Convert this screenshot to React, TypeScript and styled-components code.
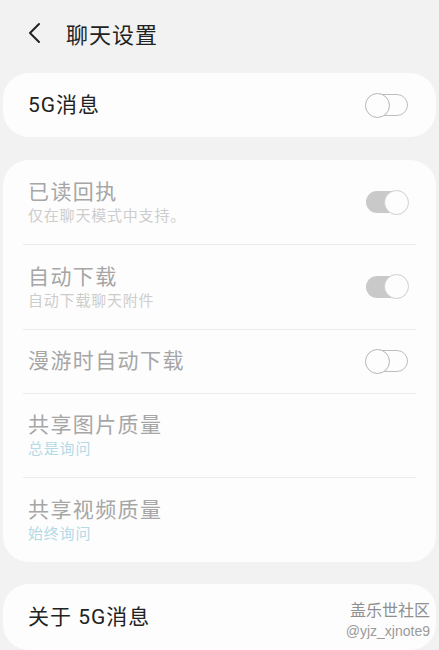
import React from "react";
import styled, { createGlobalStyle } from "styled-components";

const Global = createGlobalStyle`
  html, body { margin: 0; padding: 0; background: #f2f2f2; }
  body { font-family: "Roboto", "Noto Sans CJK SC", "Noto Sans", sans-serif; }
`;

const Page = styled.div`
  position: relative;
  width: 439px;
  height: 650px;
  overflow: hidden;
  background: #f2f2f2;
`;

const Header = styled.div`
  height: 66px;
  display: flex;
  align-items: center;
  padding-left: 26px;
  gap: 22px;
`;

const Title = styled.div`
  font-size: 22px;
  color: #222;
  letter-spacing: 1px;
`;

const Card = styled.div<{ $mt: number }>`
  margin: ${(p) => p.$mt}px 3px 0;
  background: #fdfdfd;
  border-radius: 26px;
  overflow: hidden;
`;

const Row = styled.div<{ $h: number; $divider?: boolean }>`
  position: relative;
  height: ${(p) => p.$h}px;
  display: flex;
  align-items: center;
  justify-content: space-between;
  padding: 0 28px 0 25px;
  ${(p) =>
    p.$divider
      ? `&::before { content: ""; position: absolute; top: 0; left: 20px; right: 20px; height: 1px; background: #ececec; }`
      : ""}
`;

const TextCol = styled.div`
  display: flex;
  flex-direction: column;
`;

const Label = styled.div<{ $dim?: boolean }>`
  font-size: 21px;
  line-height: 28px;
  color: ${(p) => (p.$dim ? "#a6a6a6" : "#222")};
  letter-spacing: ${(p) => (p.$dim ? "1.4px" : "1px")};
`;

const Sub = styled.div<{ $blue?: boolean }>`
  font-size: 15px;
  line-height: 20px;
  color: ${(p) => (p.$blue ? "#b3dae6" : "#cdcdcd")};
  letter-spacing: 0.8px;
`;

const Track = styled.div<{ $on: boolean }>`
  position: relative;
  width: 42px;
  height: 22px;
  box-sizing: border-box;
  border-radius: 11px;
  background: ${(p) => (p.$on ? "#c9c9c9" : "transparent")};
  border: ${(p) => (p.$on ? "none" : "1.5px solid #bdbdbd")};
`;

const Thumb = styled.div<{ $on: boolean }>`
  position: absolute;
  top: 50%;
  ${(p) => (p.$on ? "right: -1px;" : "left: -2px;")}
  width: 25px;
  height: 25px;
  margin-top: -12.5px;
  box-sizing: border-box;
  border-radius: 50%;
  background: #fdfdfd;
  border: 1.5px solid ${(p) => (p.$on ? "#cfcfcf" : "#b5b5b5")};
`;

const Watermark = styled.div`
  position: absolute;
  right: 9px;
  bottom: 10px;
  display: flex;
  flex-direction: column;
  align-items: flex-end;
  gap: 2px;
`;

const WmTop = styled.div`
  font-family: "Noto Sans CJK SC", sans-serif;
  font-size: 16px;
  line-height: 22px;
  color: #8f8f8f;
`;

const WmBottom = styled.div`
  font-family: "Liberation Sans", "Noto Sans", sans-serif;
  font-size: 14px;
  line-height: 18px;
  color: #9a9a9a;
`;

const Toggle = ({ on }: { on: boolean }) => (
  <Track $on={on}>
    <Thumb $on={on} />
  </Track>
);

const Back = () => (
  <svg width="18" height="22" viewBox="0 0 18 22">
    <path d="M13 2 L4 11 L13 20" fill="none" stroke="#222" strokeWidth="2" strokeLinecap="round" strokeLinejoin="round" />
  </svg>
);

export default function App() {
  return (
    <Page>
      <Global />
      <Header>
        <Back />
        <Title>聊天设置</Title>
      </Header>

      <Card $mt={7}>
        <Row $h={64}>
          <Label>5G消息</Label>
          <Toggle on={false} />
        </Row>
      </Card>

      <Card $mt={23}>
        <Row $h={84}>
          <TextCol>
            <Label $dim>已读回执</Label>
            <Sub>仅在聊天模式中支持。</Sub>
          </TextCol>
          <Toggle on />
        </Row>
        <Row $h={85} $divider>
          <TextCol>
            <Label $dim>自动下载</Label>
            <Sub>自动下载聊天附件</Sub>
          </TextCol>
          <Toggle on />
        </Row>
        <Row $h={64} $divider>
          <Label $dim>漫游时自动下载</Label>
          <Toggle on={false} />
        </Row>
        <Row $h={84} $divider>
          <TextCol>
            <Label $dim>共享图片质量</Label>
            <Sub $blue>总是询问</Sub>
          </TextCol>
        </Row>
        <Row $h={85} $divider>
          <TextCol>
            <Label $dim>共享视频质量</Label>
            <Sub $blue>始终询问</Sub>
          </TextCol>
        </Row>
      </Card>

      <Card $mt={22}>
        <Row $h={66}>
          <Label>关于 5G消息</Label>
        </Row>
      </Card>

      <Watermark>
        <WmTop>盖乐世社区</WmTop>
        <WmBottom>@yjz_xjnote9</WmBottom>
      </Watermark>
    </Page>
  );
}
